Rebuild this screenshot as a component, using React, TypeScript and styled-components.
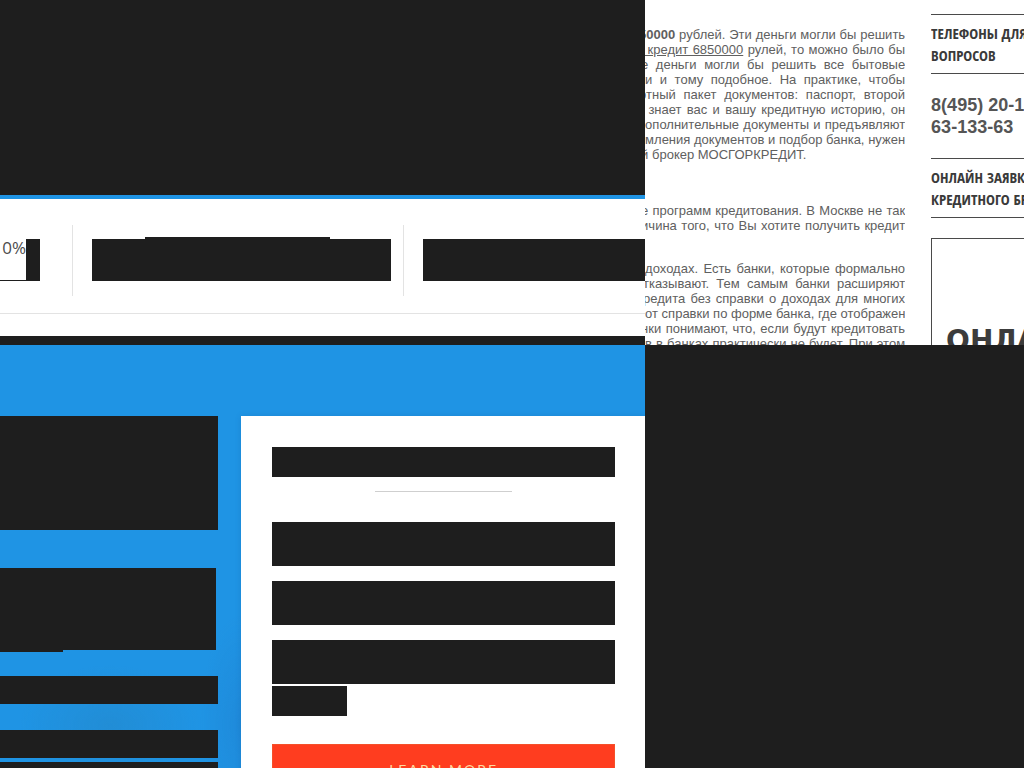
import React from "react";
import styled, { createGlobalStyle } from "styled-components";

const ink = "#1e1e1e";
const blue = "#1f94e4";

const GlobalStyle = createGlobalStyle`
  * { box-sizing: border-box; }
  body { margin: 0; background: #fff; font-family: "Liberation Sans", Arial, sans-serif; }
`;

const Page = styled.div`
  display: grid;
  grid-template-columns: minmax(0, 63fr) minmax(0, 37fr);
  height: 100vh;
  overflow: hidden;
`;

const Landing = styled.main`
  display: flex;
  flex-direction: column;
  min-height: 0;
  overflow: hidden;
`;

const Cover = styled.div`
  flex: none;
  height: 195px;
  background: ${ink};
`;

const Features = styled.section`
  flex: none;
  padding: 26px 0 22px;
  border-top: 4px solid ${blue};
  border-bottom: 9px solid ${ink};
  background: #fff;
`;

const FeatureRow = styled.div`
  display: flex;
  height: 89px;
  border-bottom: 1px solid #e3e3e3;
  padding-bottom: 17px;
`;

const Feature = styled.div<{ $width?: number }>`
  flex: ${(p) => (p.$width ? `none` : `1`)};
  width: ${(p) => (p.$width ? `${p.$width}px` : `auto`)};
  padding: 12px 12px 0 19px;
  border-right: ${(p) => (p.$width ? "1px solid #e3e3e3" : "0")};

  &:first-child { padding: 14px 32px 0 0; }
  &:last-child { padding-right: 0; }
`;

const Rate = styled.div`
  display: flex;
  justify-content: flex-end;
  height: 42px;
  overflow: hidden;
  border-right: 14px solid ${ink};
  border-bottom: 1px solid ${ink};
  font: 17px/18px "Open Sans", sans-serif;
  color: #4c4c4c;
`;

const Tab = styled.div<{ $hidden?: boolean }>`
  width: 185px;
  height: 2px;
  margin-left: 53px;
  background: ${(p) => (p.$hidden ? "transparent" : ink)};
`;

const Block = styled.div<{ $height: number; $width?: string }>`
  flex: none;
  width: ${(p) => p.$width ?? "100%"};
  height: ${(p) => p.$height}px;
  background: ${ink};
`;

const Hero = styled.section`
  flex: 1;
  display: grid;
  grid-template-columns: 218px minmax(0, 1fr);
  gap: 23px;
  min-height: 0;
  padding-top: 71px;
  background:
    radial-gradient(ellipse 90px 60px at 110px 380px, rgba(40, 120, 170, 0.25), transparent),
    radial-gradient(ellipse 40px 110px at 240px 380px, rgba(30, 100, 180, 0.2), transparent),
    ${blue};
`;

const Pitch = styled.div`
  display: flex;
  flex-direction: column;
`;

const Copy = styled.div`
  margin: 38px 0 24px;
`;

const Items = styled.div`
  display: flex;
  flex-direction: column;
  gap: 26px;
`;

const LastItem = styled(Block)`
  margin-top: 4px;
`;

const Card = styled.form`
  display: flex;
  flex-direction: column;
  padding: 31px 30px 0 31px;
  background: #fff;
  box-shadow: 0 0 6px rgba(0, 60, 120, 0.15);
`;

const Rule = styled.hr`
  width: 40%;
  height: 1px;
  margin: 14px auto 30px;
  border: 0;
  background: #cfcfcf;
`;

const Fields = styled.div`
  display: flex;
  flex-direction: column;
  gap: 15px;
  margin-bottom: 2px;
`;

const Submit = styled.button`
  flex: none;
  height: 52px;
  margin-top: 28px;
  padding: 0;
  border: 1px solid #f4502a;
  background: #ff3d1f;
  color: #ffd9a0;
  font: 14px/20px Lato, sans-serif;
  letter-spacing: 2px;
`;

const Aside = styled.div`
  display: flex;
  flex-direction: column;
  min-height: 0;
`;

const Broker = styled.div`
  flex: none;
  display: grid;
  grid-template-columns: 260px minmax(0, 1fr);
  gap: 26px;
  height: 345px;
  overflow: hidden;
`;

const Rest = styled.div`
  flex: 1;
  background: ${ink};
`;

const Article = styled.article`
  overflow: hidden;
  padding-top: 27px;
  font-size: 13px;
  line-height: 15px;
  color: #606060;
`;

const Paragraph = styled.p<{ $after?: number }>`
  margin: 0 0 ${(p) => p.$after ?? 0}px;
`;

const cuts = { none: 0, sliver: 2, part: 4, letter: 6 };

const Line = styled.span<{ $cut?: keyof typeof cuts; $last?: boolean }>`
  display: block;
  margin-left: -${(p) => cuts[p.$cut ?? "none"]}px;
  text-align: left;
  text-align-last: ${(p) => (p.$last ? "left" : "justify")};
  white-space: nowrap;
`;

const TextLink = styled.a`
  color: inherit;
  text-decoration: underline;
`;

const Sidebar = styled.aside`
  overflow: hidden;
  padding-top: 14px;
  white-space: nowrap;
`;

const Heading = styled.h2`
  margin: 0;
  padding: 7px 0;
  border: solid #4a4a4a;
  border-width: 1px 0;
  font: bold 15px/22px "Open Sans Condensed", "Liberation Sans Narrow", sans-serif;
  color: #3a3a3a;
`;

const Phones = styled.p`
  margin: 0;
  padding: 20px 0;
  font-size: 18px;
  font-weight: bold;
  line-height: 22px;
  color: #555;
`;

const Request = styled.div`
  width: 240px;
  height: 300px;
  margin-top: 20px;
  padding: 82px 0 0 14px;
  border: 1px solid #4a4a4a;
  font: bold 28px/40px "DejaVu Sans", sans-serif;
  color: #3c3c3c;
`;

export default function App() {
  return (
    <>
      <GlobalStyle />
      <Page>
        <Landing>
          <Cover />
          <Features>
            <FeatureRow>
              <Feature $width={73}><Rate>10%</Rate></Feature>
              <Feature $width={331}>
                <Tab />
                <Block $height={42} />
              </Feature>
              <Feature>
                <Tab $hidden />
                <Block $height={42} />
              </Feature>
            </FeatureRow>
          </Features>
          <Hero>
            <Pitch>
              <Block $height={114} />
              <Copy>
                <Block $height={82} $width="216px" />
                <Block $height={2} $width="63px" />
              </Copy>
              <Items>
                <Block $height={28} />
                <Block $height={28} />
              </Items>
              <LastItem $height={28} />
            </Pitch>
            <Card>
              <Block $height={30} />
              <Rule />
              <Fields>
                <Block $height={44} />
                <Block $height={44} />
                <Block $height={44} />
              </Fields>
              <Block $height={30} $width="75px" />
              <Submit type="button">LEARN MORE</Submit>
            </Card>
          </Hero>
        </Landing>
        <Aside>
          <Broker>
            <Article>
              <Paragraph $after={41}>
                <Line $cut="letter"><b>50000</b> рублей. Эти деньги могли бы решить</Line>
                <Line $cut="sliver"><TextLink href="#credit">&nbsp;кредит 6850000</TextLink> рулей, то можно было бы</Line>
                <Line $cut="part">е деньги могли бы решить все бытовые</Line>
                <Line>и и тому подобное. На практике, чтобы</Line>
                <Line $cut="letter">ртный пакет документов: паспорт, второй</Line>
                <Line $cut="sliver">&nbsp;знает вас и вашу кредитную историю, он</Line>
                <Line>ополнительные документы и предъявляют</Line>
                <Line>мления документов и подбор банка, нужен</Line>
                <Line $cut="part" $last>й брокер МОСГОРКРЕДИТ.</Line>
              </Paragraph>
              <Paragraph $after={28}>
                <Line $cut="part">е программ кредитования. В Москве не так</Line>
                <Line $cut="part">ичина того, что Вы хотите получить кредит</Line>
              </Paragraph>
              <Paragraph>
                <Line>доходах. Есть банки, которые формально</Line>
                <Line $cut="sliver">тказывают. Тем самым банки расширяют</Line>
                <Line $cut="sliver">редита без справки о доходах для многих</Line>
                <Line>от справки по форме банка, где отображен</Line>
                <Line $cut="part">нки понимают, что, если будут кредитовать</Line>
                <Line>в в банках практически не будет. При этом</Line>
              </Paragraph>
            </Article>
            <Sidebar>
              <Heading>ТЕЛЕФОНЫ ДЛЯ Н<br />ВОПРОСОВ</Heading>
              <Phones>8(495) 20-13<br />63-133-63</Phones>
              <Heading>ОНЛАЙН ЗАЯВКА<br />КРЕДИТНОГО БРО</Heading>
              <Request>ОНЛАЙН</Request>
            </Sidebar>
          </Broker>
          <Rest />
        </Aside>
      </Page>
    </>
  );
}
